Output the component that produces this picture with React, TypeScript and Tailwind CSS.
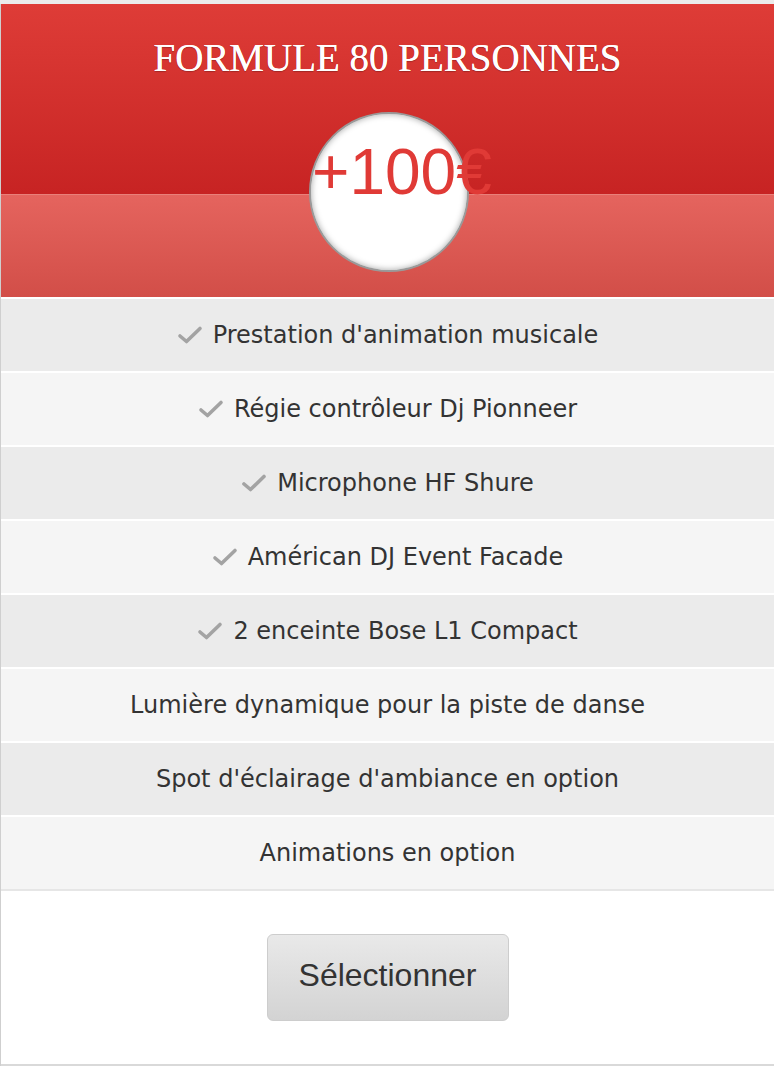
import React from "react";

const features: { label: string; check: boolean }[] = [
    { label: "Prestation d'animation musicale", check: true },
    { label: "Régie contrôleur Dj Pionneer", check: true },
    { label: "Microphone HF Shure", check: true },
    { label: "Américan DJ Event Facade", check: true },
    { label: "2 enceinte Bose L1 Compact", check: true },
    { label: "Lumière dynamique pour la piste de danse", check: false },
    { label: "Spot d'éclairage d'ambiance en option", check: false },
    { label: "Animations en option", check: false },
];

const Check = () => (
    <svg width="26" height="20" viewBox="0 0 26 20" className="shrink-0">
        <path
            d="M3 11 L9.5 16.5 L23 3.5"
            fill="none"
            stroke="#a3a3a3"
            strokeWidth="3.6"
            strokeLinecap="round"
            strokeLinejoin="round"
        />
    </svg>
);

export default function App() {
    return (
        <div className="w-[774px] h-[1066px] pt-[4px] bg-[#ebebeb]">
            <div className="border-l border-[#cfcfcf] bg-white">
                {/* Header */}
                <div className="relative">
                    <div className="h-[190px] bg-gradient-to-b from-[#de3c37] to-[#c72323] flex justify-center pt-[34px]">
                        <h2
                            className="text-white text-[39px] leading-none [text-shadow:0_0_0.6px_#fff,0_1px_1px_rgba(0,0,0,0.25)]"
                            style={{ fontFamily: '"Liberation Serif", "DejaVu Serif", serif' }}
                        >
                            FORMULE 80 PERSONNES
                        </h2>
                    </div>
                    <div className="h-[103px] bg-gradient-to-b from-[#e5645e] to-[#d24e48] border-t border-[#e9807a]" />

                    {/* Price bubble */}
                    <div className="absolute left-[308px] top-[108px] w-[160px] h-[160px] rounded-full bg-white border-2 border-[#9a9a9a] shadow-[inset_0_0_6px_rgba(0,0,0,0.35)]" />
                    <div
                        className="absolute left-[311px] top-[136px] text-[#e03a36] text-[64px] leading-none"
                        style={{ fontFamily: '"Liberation Sans", Arial, sans-serif' }}
                    >
                        +100€
                    </div>
                </div>

                {/* Features */}
                <div className="border-t-2 border-white">
                    {features.map((f, i) => (
                        <div
                            key={i}
                            className={`h-[74px] flex items-center justify-center gap-[10px] border-b-2 ${
                                i === features.length - 1 ? "border-[#e6e6e6]" : "border-white"
                            } ${i % 2 === 0 ? "bg-[#ebebeb]" : "bg-[#f5f5f5]"}`}
                        >
                            {f.check && <Check />}
                            <span
                                className="text-[#333] text-[24px]"
                                style={{ fontFamily: '"DejaVu Sans", Verdana, sans-serif' }}
                            >
                                {f.label}
                            </span>
                        </div>
                    ))}
                </div>

                {/* Footer */}
                <div className="h-[177px] flex justify-center pt-[43px] border-b-4 border-[#d9d9d9]">
                    <button
                        className="w-[242px] h-[87px] rounded-[6px] border border-[#cdcdcd] bg-gradient-to-b from-[#e9e9e9] to-[#d3d3d3] text-[#333] text-[32px] leading-none pb-[6px]"
                        style={{ fontFamily: '"Liberation Sans", Arial, sans-serif' }}
                    >
                        Sélectionner
                    </button>
                </div>
            </div>
        </div>
    );
}
